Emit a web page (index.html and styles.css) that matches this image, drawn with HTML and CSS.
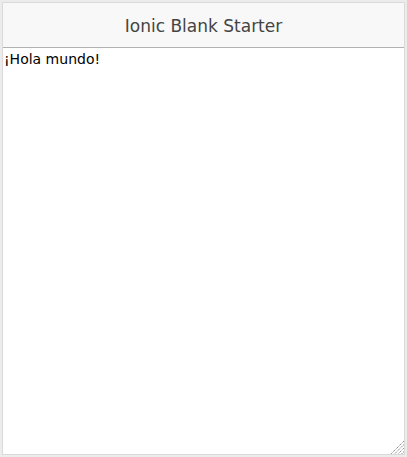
FILE: index.html
```html
<!DOCTYPE html>
<html>
<head>
<meta charset="utf-8">
<link rel="stylesheet" href="styles.css">
</head>
<body>
<div class="frame">
  <div class="bar">
    <h1 class="title">Ionic Blank Starter</h1>
  </div>
  <div class="content">¡Hola mundo!</div>
  <svg class="grip" width="14" height="14" viewBox="0 0 14 14">
    <g stroke="#8f8f8f" stroke-width="1" stroke-dasharray="1.4 0.7">
      <line x1="14" y1="1" x2="1" y2="14"/>
      <line x1="14" y1="4.5" x2="4.5" y2="14"/>
      <line x1="14" y1="8" x2="8" y2="14"/>
      <line x1="14" y1="11.5" x2="11.5" y2="14"/>
    </g>
  </svg>
</div>
</body>
</html>
```
FILE: styles.css
```css
html, body {
  margin: 0;
  padding: 0;
  height: 100%;
}
body {
  background: #ececec;
  padding: 2px;
  box-sizing: border-box;
  font-family: "DejaVu Sans", sans-serif;
}
.frame {
  position: relative;
  box-sizing: border-box;
  width: 403px;
  height: 453px;
  border: 1px solid #dadada;
  background: #fff;
  display: flex;
  flex-direction: column;
}
.bar {
  height: 44px;
  flex: none;
  background: #f8f8f8;
  border-bottom: 1px solid #b2b2b2;
  display: flex;
  align-items: center;
  justify-content: center;
}
.title {
  margin: 0;
  padding-top: 1px;
  font-size: 17px;
  font-weight: 500;
  color: #444;
}
.content {
  padding: 3px 1px;
  font-size: 14px;
  color: #000;
}
.grip {
  position: absolute;
  right: 0;
  bottom: 0;
}
```
